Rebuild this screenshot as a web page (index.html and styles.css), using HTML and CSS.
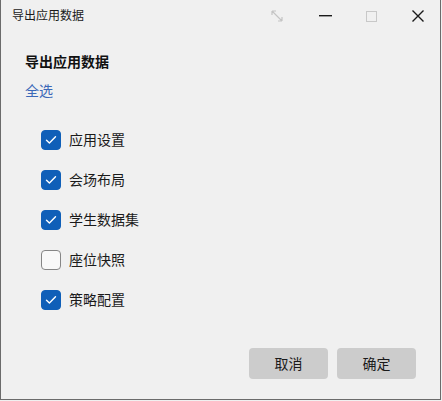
FILE: index.html
```html
<!DOCTYPE html>
<html lang="zh">
<head>
<meta charset="utf-8">
<title>导出应用数据</title>
<link rel="stylesheet" href="styles.css">
</head>
<body>
<div class="window">
  <div class="titlebar">
    <span class="title">导出应用数据</span>
    <div class="controls">
      <span class="ctl ctl-resize">
        <svg width="12" height="12" viewBox="0 0 12 12"><path d="M1 1 L11 11 M1 1 L1 5 M1 1 L5 1 M11 11 L11 7 M11 11 L7 11" stroke="#c4c4c4" stroke-width="1.2" fill="none"/></svg>
      </span>
      <span class="ctl ctl-min">
        <svg width="13" height="2" viewBox="0 0 13 2"><rect x="0" y="0" width="13" height="1.4" fill="#1a1a1a"/></svg>
      </span>
      <span class="ctl ctl-max">
        <svg width="11" height="11" viewBox="0 0 11 11"><rect x="0.5" y="0.5" width="10" height="10" stroke="#c8c8c8" stroke-width="1" fill="none"/></svg>
      </span>
      <span class="ctl ctl-close">
        <svg width="12" height="12" viewBox="0 0 12 12"><path d="M0.5 0.5 L11.5 11.5 M11.5 0.5 L0.5 11.5" stroke="#1a1a1a" stroke-width="1.4" fill="none"/></svg>
      </span>
    </div>
  </div>
  <div class="content">
    <div class="heading">导出应用数据</div>
    <a class="select-all">全选</a>
    <ul class="list">
      <li class="row"><span class="box checked"><svg width="12" height="10" viewBox="0 0 12 10"><path d="M1.5 5.2 L4.4 8 L10.5 1.8" stroke="#fff" stroke-width="1.4" fill="none" stroke-linecap="round" stroke-linejoin="round"/></svg></span><span class="label">应用设置</span></li>
      <li class="row"><span class="box checked"><svg width="12" height="10" viewBox="0 0 12 10"><path d="M1.5 5.2 L4.4 8 L10.5 1.8" stroke="#fff" stroke-width="1.4" fill="none" stroke-linecap="round" stroke-linejoin="round"/></svg></span><span class="label">会场布局</span></li>
      <li class="row"><span class="box checked"><svg width="12" height="10" viewBox="0 0 12 10"><path d="M1.5 5.2 L4.4 8 L10.5 1.8" stroke="#fff" stroke-width="1.4" fill="none" stroke-linecap="round" stroke-linejoin="round"/></svg></span><span class="label">学生数据集</span></li>
      <li class="row"><span class="box"></span><span class="label">座位快照</span></li>
      <li class="row"><span class="box checked"><svg width="12" height="10" viewBox="0 0 12 10"><path d="M1.5 5.2 L4.4 8 L10.5 1.8" stroke="#fff" stroke-width="1.4" fill="none" stroke-linecap="round" stroke-linejoin="round"/></svg></span><span class="label">策略配置</span></li>
    </ul>
  </div>
  <div class="footer">
    <button class="btn">取消</button>
    <button class="btn">确定</button>
  </div>
</div>
</body>
</html>
```
FILE: styles.css
```css
html, body {
  margin: 0;
  padding: 0;
  background: #f0f0f0;
}
body {
  font-family: "Noto Sans CJK SC", "Noto Sans", sans-serif;
  color: #1a1a1a;
}
.window {
  width: 441px;
  height: 400px;
  box-sizing: border-box;
  background: #f0f0f0;
  border-left: 1px solid #6b6b6b;
  border-right: 1px solid #6b6b6b;
  border-bottom: 1px solid #6b6b6b;
  display: flex;
  flex-direction: column;
}
.titlebar {
  height: 32px;
  display: flex;
  align-items: center;
  padding-left: 11px;
}
.title {
  font-size: 12px;
  line-height: 16px;
  padding-bottom: 2px;
  color: #1a1a1a;
}
.controls {
  margin-left: auto;
  display: flex;
  align-items: center;
  height: 32px;
}
.ctl {
  display: flex;
  align-items: center;
  justify-content: center;
  width: 46px;
  height: 32px;
}
.ctl-resize { padding-right: 4px; box-sizing: border-box; }
.ctl-close { padding-left: 2px; box-sizing: border-box; }
.ctl svg { display: block; }
.content {
  padding: 19px 0 0 24px;
  display: flex;
  flex-direction: column;
  align-items: flex-start;
}
.heading {
  font-size: 14px;
  line-height: 20px;
  font-weight: bold;
  color: #111;
}
.select-all {
  margin-top: 9px;
  font-size: 14px;
  line-height: 20px;
  color: #3b68b8;
  cursor: pointer;
}
.list {
  list-style: none;
  margin: 20px 0 0 0;
  padding: 0 0 0 16px;
}
.row {
  height: 40px;
  display: flex;
  align-items: center;
}
.box {
  width: 20px;
  height: 20px;
  box-sizing: border-box;
  border-radius: 4px;
  border: 1px solid #868686;
  background: #f9f9f9;
  display: flex;
  align-items: center;
  justify-content: center;
}
.box.checked {
  background: #0f5fb8;
  border-color: #0f5fb8;
}
.label {
  margin-left: 8px;
  font-size: 14px;
  line-height: 20px;
  padding-bottom: 2px;
  color: #1a1a1a;
}
.footer {
  margin-top: auto;
  display: flex;
  justify-content: flex-end;
  gap: 9px;
  padding: 0 24px 20px 0;
}
.btn {
  width: 79px;
  height: 31px;
  border: none;
  border-radius: 4px;
  background: #cccccc;
  font-family: "Noto Sans CJK SC", "Noto Sans", sans-serif;
  font-size: 14px;
  line-height: 20px;
  color: #1a1a1a;
  padding: 0 0 2px 0;
}
```
